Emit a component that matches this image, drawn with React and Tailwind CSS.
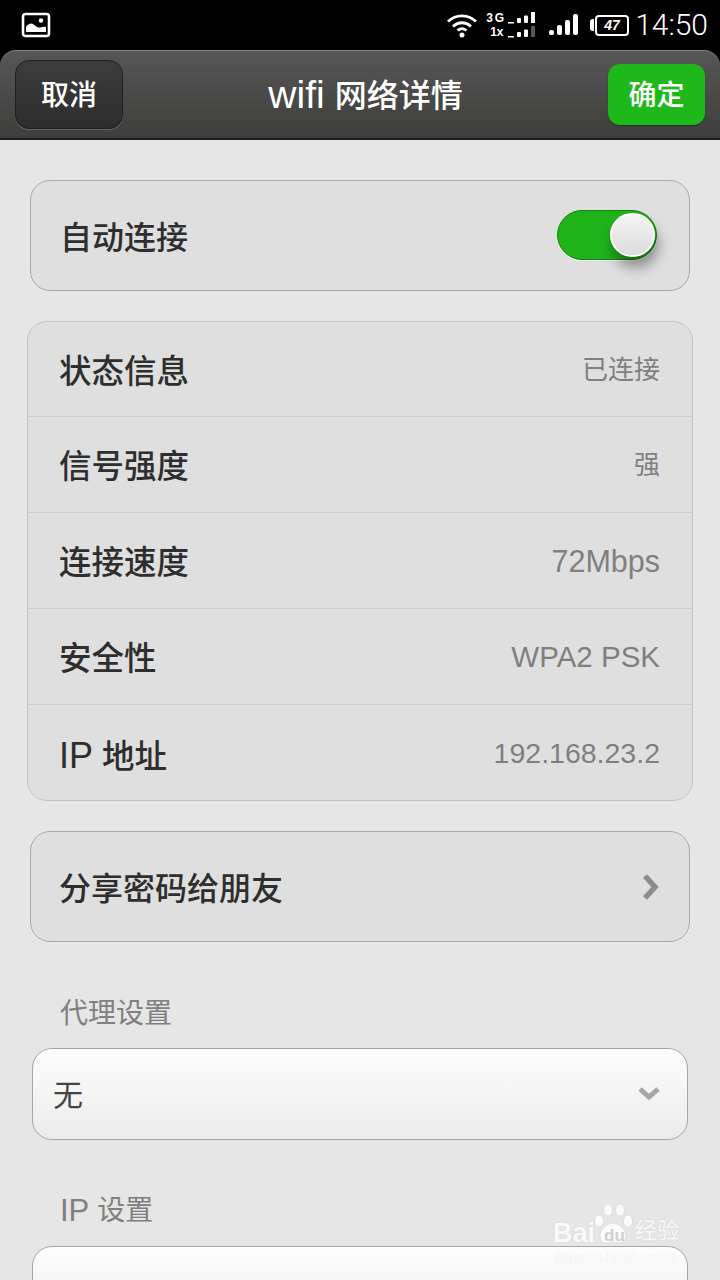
const font = "font-['Liberation_Sans','Noto_Sans_CJK_SC',sans-serif]";
const halo = "[text-shadow:0_0_1px_rgba(170,170,170,0.5)]";

function ImageIcon() {
  return (
    <svg width="30" height="26" viewBox="0 0 30 26" className="block">
      <rect x="2" y="2" width="26" height="22" rx="2.5" fill="none" stroke="#fff" strokeWidth="2.6" />
      <circle cx="20" cy="8.5" r="2.2" fill="#fff" />
      <path d="M5 20v-5c2-3 5-4.500 7-3 2 1.500 4 3.500 6 3.500s4-1.500 7-.5v5z" fill="#fff" />
    </svg>
  );
}

function Wifi() {
  return (
    <svg width="32" height="26" viewBox="0 0 32 26" className="block">
      <path d="M2 9.500C10 2 22 2 30 9.500M7 14.500c5.500-5 12.500-5 18 0M11.500 18.500c3-2.500 6-2.500 9 0" fill="none" stroke="#fff" strokeWidth="2.8" />
      <circle cx="16" cy="23" r="2.500" fill="#fff" />
    </svg>
  );
}

function MiniBars({ dim }) {
  return (
    <svg width="28" height="12" viewBox="0 0 28 12" className="block">
      <rect x="0" y="10" width="6" height="1.500" fill="#fff" />
      <rect x="9" y="6" width="4" height="5" rx="1" fill="#fff" />
      <rect x="16" y="3.500" width="4" height="7.500" rx="1" fill="#fff" />
      <rect x="23" y="0" width="4" height="11" fill={dim ? "#555" : "#fff"} />
    </svg>
  );
}

function Signal() {
  return (
    <svg width="30" height="24" viewBox="0 0 30 24" className="block">
      <rect x="0" y="17" width="5" height="5" rx="2" fill="#fff" />
      <rect x="8" y="12" width="5" height="10" rx="2" fill="#fff" />
      <rect x="16" y="7" width="5" height="15" rx="2" fill="#fff" />
      <rect x="24" y="1" width="5" height="21" rx="2" fill="#fff" />
    </svg>
  );
}

function Battery() {
  return (
    <div className="flex items-center">
      <div className="w-[4px] h-[12px] bg-white rounded-l-[3px]" />
      <div className="w-[34px] h-[21px] border-2 border-white rounded-[4px] flex items-center justify-center text-white text-[14px] font-bold italic leading-none ml-[1px]">47</div>
    </div>
  );
}

function StatusBar() {
  return (
    <div className="h-[50px] shrink-0 bg-black flex items-center justify-between pl-[21px] pr-[12px]">
      <ImageIcon />
      <div className="flex items-center">
        <Wifi />
        <div className="ml-[8px] w-[50px] flex flex-col gap-[2px]">
          <div className="flex items-end h-[12px] gap-[1px]">
            <span className="text-white text-[12px] font-bold leading-none w-[21px] tracking-[2px]">3G</span>
            <MiniBars />
          </div>
          <div className="flex items-end h-[12px] gap-[1px]">
            <span className="text-white text-[12px] font-bold leading-none w-[21px] pl-[4px]">1x</span>
            <MiniBars dim />
          </div>
        </div>
        <div className="ml-[13px]"><Signal /></div>
        <div className="ml-[11px]"><Battery /></div>
        <span className="ml-[6px] font-['Roboto',sans-serif] font-light text-white text-[30px] leading-none">14:50</span>
      </div>
    </div>
  );
}

function Header() {
  return (
    <div className="bg-black shrink-0">
      <div className="h-[90px] rounded-t-[16px] border-t border-[#8a8a8a] border-b-2 border-b-[#1c1c1c] bg-gradient-to-b from-[#565656] to-[#3e3f3c] flex items-center justify-between pl-[15px] pr-[15px]">
        <div className="w-[108px] h-[69px] pt-[2px] rounded-[14px] border border-[#1f1f1f] shadow-[0_1px_0_#666] bg-gradient-to-b from-[#3d3d3d] to-[#2d2d2d] flex items-center justify-center text-white text-[28px] font-medium">取消</div>
        <div className="text-white text-[32px] font-medium flex items-center pt-[2px]"><span className="text-[39px] font-normal mr-[10px]">wifi</span>网络详情</div>
        <div className="w-[97px] h-[61px] pt-[2px] rounded-[12px] bg-[#1fb81a] shadow-[0_1px_1px_#2a2a2a] flex items-center justify-center text-white text-[28px] font-medium">确定</div>
      </div>
    </div>
  );
}

function Toggle() {
  return (
    <div className="relative w-[100px] h-[50px] -mt-[1px] rounded-full bg-[#1fb31a] border border-[#17800f] shadow-[0_1px_0_#fff]">
      <div className="absolute right-[1px] top-[2px] w-[45px] h-[44px] rounded-full border-2 border-white bg-gradient-to-b from-[#f4f4f4] to-[#dcdcdc] shadow-[3px_10px_14px_rgba(0,0,0,0.4)]" />
    </div>
  );
}

function Row({ label, value, height, border, size }) {
  return (
    <div className={"flex items-center justify-between pl-[32px] pr-[32px] pt-[2px] " + height + " " + (border ? "border-b border-[#cfcfcf]" : "")}>
      <span className="text-[32.500px] font-medium text-[#2e2e2e] -ml-[1px] pt-[4px]">{label}</span>
      <span className={"text-[#7f7f7f] " + size}>{value}</span>
    </div>
  );
}

function Select({ value }) {
  return (
    <div className="mx-[32px] h-[92px] shrink-0 rounded-[20px] border border-[#a6a6a6] bg-gradient-to-b from-[#fdfdfd] to-[#ebebeb] flex items-center justify-between pl-[20px] pr-[26px]">
      <span className="text-[30px] text-[#444] pt-[2px]">{value}</span>
      <svg width="24" height="16" viewBox="0 0 24 16" className="block">
        <path d="M3 3l9 8 9-8" fill="none" stroke="#a6a6a6" strokeWidth="5" />
      </svg>
    </div>
  );
}

function Watermark() {
  return (
    <div className="absolute left-[553px] top-[1202px] w-[130px] h-[64px] text-white">
      <svg width="40" height="44" viewBox="0 0 40 44" className="absolute left-[41px] top-0 opacity-85">
        <ellipse cx="5" cy="19" rx="4.500" ry="6" fill="#fff" stroke="#d0d0d0" strokeWidth="0.6" />
        <ellipse cx="14" cy="8" rx="4.500" ry="6" fill="#fff" stroke="#d0d0d0" strokeWidth="0.6" />
        <ellipse cx="26" cy="8" rx="4.500" ry="6" fill="#fff" stroke="#d0d0d0" strokeWidth="0.6" />
        <ellipse cx="34" cy="19" rx="4.500" ry="6" fill="#fff" stroke="#d0d0d0" strokeWidth="0.6" />
        <path d="M6 34c0-7 8-13 13-13s13 6 13 13c0 4-4 7-7 7-2 0-4-1-6-1s-4 1-7 1c-3 0-6-3-6-7z" fill="#fff" stroke="#d0d0d0" strokeWidth="0.6" />
      </svg>
      <span className={"absolute left-0 top-[18px] text-[27px] font-bold leading-none opacity-80 " + halo}>Bai</span>
      <span className="absolute left-[51px] top-[25px] text-[17px] font-bold leading-none text-[#cfcfcf]">du</span>
      <span className={"absolute left-[82px] top-[18px] text-[22px] leading-none opacity-80 " + halo}>经验</span>
      <span className={"absolute left-[2px] top-[47px] whitespace-nowrap text-[15px] leading-none opacity-60 " + halo}>jingyan.baidu.com</span>
    </div>
  );
}

export default function App() {
  return (
    <div className={"relative w-[720px] h-[1280px] overflow-hidden bg-[#e6e6e6] flex flex-col " + font}>
      <StatusBar />
      <Header />
      <div className="mt-[40px] mx-[30px] h-[111px] shrink-0 rounded-[20px] border border-[#a9a9a9] bg-[#dfdfdf] flex items-center justify-between pl-[29px] pr-[32px]">
        <span className="text-[32px] font-medium text-[#2e2e2e] pt-[5px]">自动连接</span>
        <Toggle />
      </div>
      <div className="mt-[30px] mx-[27px] h-[480px] shrink-0 rounded-[20px] border border-[#c2c2c2] bg-[#dfdfdf] overflow-hidden">
        <Row height="h-[95px]" label="状态信息" value="已连接" size="text-[26px]" border />
        <Row height="h-[96px]" label="信号强度" value="强" size="text-[26px]" border />
        <Row height="h-[96px]" label="连接速度" value="72Mbps" size="text-[30.500px]" border />
        <Row height="h-[96px]" label="安全性" value="WPA2 PSK" size="text-[29.500px]" border />
        <Row height="h-[95px]" label={<><span className="text-[36px]">IP</span> 地址</>} value="192.168.23.2" size="text-[28.500px]" />
      </div>
      <div className="mt-[30px] mx-[30px] h-[111px] shrink-0 rounded-[20px] border border-[#a9a9a9] bg-[#dfdfdf] flex items-center justify-between pl-[28px] pr-[28px]">
        <span className="text-[32px] font-medium text-[#2e2e2e] pt-[5px]">分享密码给朋友</span>
        <svg width="20" height="28" viewBox="0 0 20 28" className="block">
          <path d="M4 3l10 11L4 25" fill="none" stroke="#8c8c8c" strokeWidth="5.500" />
        </svg>
      </div>
      <div className="mt-[52px] mb-[14px] pl-[60px] h-[40px] shrink-0 flex items-center text-[28px] text-[#808080]">代理设置</div>
      <Select value="无" />
      <div className="mt-[51px] mb-[15px] pl-[60px] h-[40px] shrink-0 flex items-center text-[28px] text-[#808080]"><span className="text-[31px] mr-[8px]">IP</span>设置</div>
      <Select value="DHCP" />
      <Watermark />
    </div>
  );
}
